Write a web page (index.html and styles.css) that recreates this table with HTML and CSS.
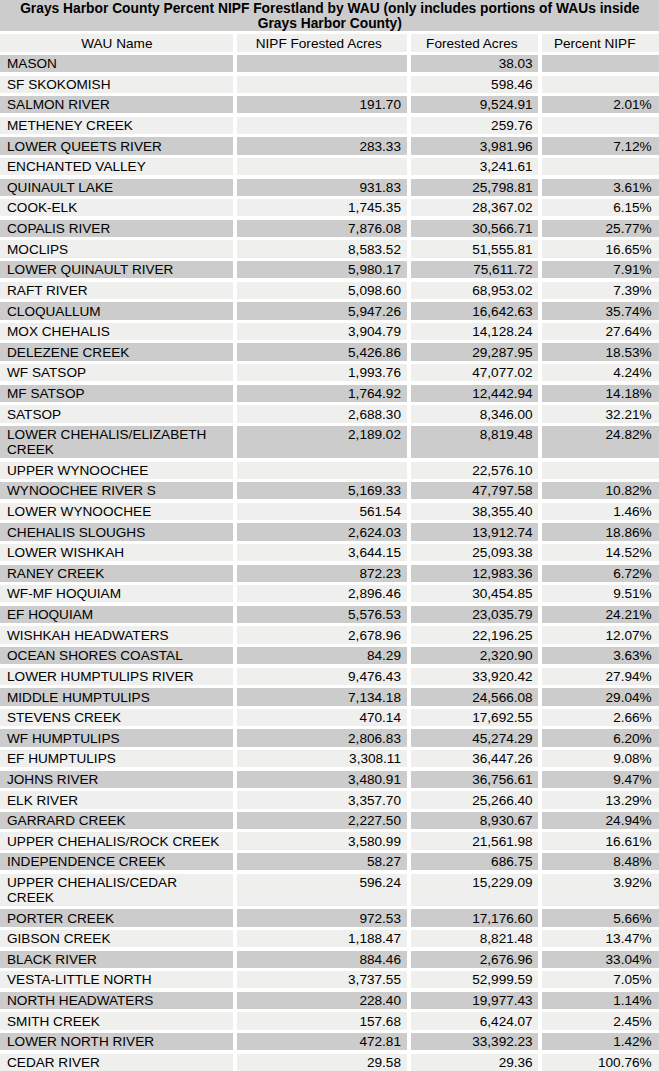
FILE: index.html
```html
<!DOCTYPE html>
<html>
<head>
<meta charset="utf-8">
<title>Grays Harbor County Percent NIPF Forestland by WAU</title>
<link rel="stylesheet" href="styles.css">
</head>
<body>
<div class="table">
  <div class="title">Grays Harbor County Percent NIPF Forestland by WAU (only includes portions of WAUs inside Grays Harbor County)</div>
  <div class="row head">
    <div class="c c1">WAU Name</div><div class="c c2">NIPF Forested Acres</div><div class="c c3">Forested Acres</div><div class="c c4">Percent NIPF</div>
  </div>
  <div class="row odd"><div class="c c1">MASON</div><div class="c c2"></div><div class="c c3">38.03</div><div class="c c4"></div></div>
  <div class="row"><div class="c c1">SF SKOKOMISH</div><div class="c c2"></div><div class="c c3">598.46</div><div class="c c4"></div></div>
  <div class="row odd"><div class="c c1">SALMON RIVER</div><div class="c c2">191.70</div><div class="c c3">9,524.91</div><div class="c c4">2.01%</div></div>
  <div class="row"><div class="c c1">METHENEY CREEK</div><div class="c c2"></div><div class="c c3">259.76</div><div class="c c4"></div></div>
  <div class="row odd"><div class="c c1">LOWER QUEETS RIVER</div><div class="c c2">283.33</div><div class="c c3">3,981.96</div><div class="c c4">7.12%</div></div>
  <div class="row"><div class="c c1">ENCHANTED VALLEY</div><div class="c c2"></div><div class="c c3">3,241.61</div><div class="c c4"></div></div>
  <div class="row odd"><div class="c c1">QUINAULT LAKE</div><div class="c c2">931.83</div><div class="c c3">25,798.81</div><div class="c c4">3.61%</div></div>
  <div class="row"><div class="c c1">COOK-ELK</div><div class="c c2">1,745.35</div><div class="c c3">28,367.02</div><div class="c c4">6.15%</div></div>
  <div class="row odd"><div class="c c1">COPALIS RIVER</div><div class="c c2">7,876.08</div><div class="c c3">30,566.71</div><div class="c c4">25.77%</div></div>
  <div class="row"><div class="c c1">MOCLIPS</div><div class="c c2">8,583.52</div><div class="c c3">51,555.81</div><div class="c c4">16.65%</div></div>
  <div class="row odd"><div class="c c1">LOWER QUINAULT RIVER</div><div class="c c2">5,980.17</div><div class="c c3">75,611.72</div><div class="c c4">7.91%</div></div>
  <div class="row"><div class="c c1">RAFT RIVER</div><div class="c c2">5,098.60</div><div class="c c3">68,953.02</div><div class="c c4">7.39%</div></div>
  <div class="row odd"><div class="c c1">CLOQUALLUM</div><div class="c c2">5,947.26</div><div class="c c3">16,642.63</div><div class="c c4">35.74%</div></div>
  <div class="row"><div class="c c1">MOX CHEHALIS</div><div class="c c2">3,904.79</div><div class="c c3">14,128.24</div><div class="c c4">27.64%</div></div>
  <div class="row odd"><div class="c c1">DELEZENE CREEK</div><div class="c c2">5,426.86</div><div class="c c3">29,287.95</div><div class="c c4">18.53%</div></div>
  <div class="row"><div class="c c1">WF SATSOP</div><div class="c c2">1,993.76</div><div class="c c3">47,077.02</div><div class="c c4">4.24%</div></div>
  <div class="row odd"><div class="c c1">MF SATSOP</div><div class="c c2">1,764.92</div><div class="c c3">12,442.94</div><div class="c c4">14.18%</div></div>
  <div class="row"><div class="c c1">SATSOP</div><div class="c c2">2,688.30</div><div class="c c3">8,346.00</div><div class="c c4">32.21%</div></div>
  <div class="row odd"><div class="c c1">LOWER CHEHALIS/ELIZABETH CREEK</div><div class="c c2">2,189.02</div><div class="c c3">8,819.48</div><div class="c c4">24.82%</div></div>
  <div class="row"><div class="c c1">UPPER WYNOOCHEE</div><div class="c c2"></div><div class="c c3">22,576.10</div><div class="c c4"></div></div>
  <div class="row odd"><div class="c c1">WYNOOCHEE RIVER S</div><div class="c c2">5,169.33</div><div class="c c3">47,797.58</div><div class="c c4">10.82%</div></div>
  <div class="row"><div class="c c1">LOWER WYNOOCHEE</div><div class="c c2">561.54</div><div class="c c3">38,355.40</div><div class="c c4">1.46%</div></div>
  <div class="row odd"><div class="c c1">CHEHALIS SLOUGHS</div><div class="c c2">2,624.03</div><div class="c c3">13,912.74</div><div class="c c4">18.86%</div></div>
  <div class="row"><div class="c c1">LOWER WISHKAH</div><div class="c c2">3,644.15</div><div class="c c3">25,093.38</div><div class="c c4">14.52%</div></div>
  <div class="row odd"><div class="c c1">RANEY CREEK</div><div class="c c2">872.23</div><div class="c c3">12,983.36</div><div class="c c4">6.72%</div></div>
  <div class="row"><div class="c c1">WF-MF HOQUIAM</div><div class="c c2">2,896.46</div><div class="c c3">30,454.85</div><div class="c c4">9.51%</div></div>
  <div class="row odd"><div class="c c1">EF HOQUIAM</div><div class="c c2">5,576.53</div><div class="c c3">23,035.79</div><div class="c c4">24.21%</div></div>
  <div class="row"><div class="c c1">WISHKAH HEADWATERS</div><div class="c c2">2,678.96</div><div class="c c3">22,196.25</div><div class="c c4">12.07%</div></div>
  <div class="row odd"><div class="c c1">OCEAN SHORES COASTAL</div><div class="c c2">84.29</div><div class="c c3">2,320.90</div><div class="c c4">3.63%</div></div>
  <div class="row"><div class="c c1">LOWER HUMPTULIPS RIVER</div><div class="c c2">9,476.43</div><div class="c c3">33,920.42</div><div class="c c4">27.94%</div></div>
  <div class="row odd"><div class="c c1">MIDDLE HUMPTULIPS</div><div class="c c2">7,134.18</div><div class="c c3">24,566.08</div><div class="c c4">29.04%</div></div>
  <div class="row"><div class="c c1">STEVENS CREEK</div><div class="c c2">470.14</div><div class="c c3">17,692.55</div><div class="c c4">2.66%</div></div>
  <div class="row odd"><div class="c c1">WF HUMPTULIPS</div><div class="c c2">2,806.83</div><div class="c c3">45,274.29</div><div class="c c4">6.20%</div></div>
  <div class="row"><div class="c c1">EF HUMPTULIPS</div><div class="c c2">3,308.11</div><div class="c c3">36,447.26</div><div class="c c4">9.08%</div></div>
  <div class="row odd"><div class="c c1">JOHNS RIVER</div><div class="c c2">3,480.91</div><div class="c c3">36,756.61</div><div class="c c4">9.47%</div></div>
  <div class="row"><div class="c c1">ELK RIVER</div><div class="c c2">3,357.70</div><div class="c c3">25,266.40</div><div class="c c4">13.29%</div></div>
  <div class="row odd"><div class="c c1">GARRARD CREEK</div><div class="c c2">2,227.50</div><div class="c c3">8,930.67</div><div class="c c4">24.94%</div></div>
  <div class="row"><div class="c c1">UPPER CHEHALIS/ROCK CREEK</div><div class="c c2">3,580.99</div><div class="c c3">21,561.98</div><div class="c c4">16.61%</div></div>
  <div class="row odd"><div class="c c1">INDEPENDENCE CREEK</div><div class="c c2">58.27</div><div class="c c3">686.75</div><div class="c c4">8.48%</div></div>
  <div class="row"><div class="c c1">UPPER CHEHALIS/CEDAR CREEK</div><div class="c c2">596.24</div><div class="c c3">15,229.09</div><div class="c c4">3.92%</div></div>
  <div class="row odd"><div class="c c1">PORTER CREEK</div><div class="c c2">972.53</div><div class="c c3">17,176.60</div><div class="c c4">5.66%</div></div>
  <div class="row"><div class="c c1">GIBSON CREEK</div><div class="c c2">1,188.47</div><div class="c c3">8,821.48</div><div class="c c4">13.47%</div></div>
  <div class="row odd"><div class="c c1">BLACK RIVER</div><div class="c c2">884.46</div><div class="c c3">2,676.96</div><div class="c c4">33.04%</div></div>
  <div class="row"><div class="c c1">VESTA-LITTLE NORTH</div><div class="c c2">3,737.55</div><div class="c c3">52,999.59</div><div class="c c4">7.05%</div></div>
  <div class="row odd"><div class="c c1">NORTH HEADWATERS</div><div class="c c2">228.40</div><div class="c c3">19,977.43</div><div class="c c4">1.14%</div></div>
  <div class="row"><div class="c c1">SMITH CREEK</div><div class="c c2">157.68</div><div class="c c3">6,424.07</div><div class="c c4">2.45%</div></div>
  <div class="row odd"><div class="c c1">LOWER NORTH RIVER</div><div class="c c2">472.81</div><div class="c c3">33,392.23</div><div class="c c4">1.42%</div></div>
  <div class="row"><div class="c c1">CEDAR RIVER</div><div class="c c2">29.58</div><div class="c c3">29.36</div><div class="c c4">100.76%</div></div>
</div>
</body>
</html>
```
FILE: styles.css
```css
html, body {
  margin: 0;
  padding: 0;
  background: #ffffff;
  overflow: hidden;
}

body {
  font-family: "Liberation Sans", Arial, sans-serif;
  font-size: 13.6px;
  color: #000000;
}

.table {
  width: 659.7px;
  display: flex;
  flex-direction: column;
  gap: 3.32px;
}

.title {
  background: #cccccc;
  font-size: 13.8px;
  font-weight: bold;
  text-align: center;
  line-height: 15px;
  padding: 1px 0 0;
  height: 30px;
}

.row {
  display: flex;
  gap: 4px;
}

.c {
  background: #efefed;
  line-height: 15px;
  padding-top: 1.3px;
  padding-bottom: 1px;
  min-height: 15px;
  box-sizing: content-box;
}

.row.odd .c {
  background: #cccccc;
}

.c1 {
  width: 215.7px;
  padding-left: 7px;
  padding-right: 10px;
  text-align: left;
}

.c2 {
  width: 164.3px;
  padding-left: 0;
  padding-right: 6px;
  text-align: right;
}

.c3 {
  width: 121.7px;
  padding-left: 0;
  padding-right: 5px;
  text-align: right;
}

.c4 {
  width: 110px;
  padding-left: 0;
  padding-right: 8px;
  text-align: right;
}

.head .c {
  text-align: center;
}

.head .c1 {
  padding-left: 9px;
  padding-right: 8px;
  width: 215.7px;
}

.head .c4 {
  padding-right: 12px;
  width: 106px;
}
```
